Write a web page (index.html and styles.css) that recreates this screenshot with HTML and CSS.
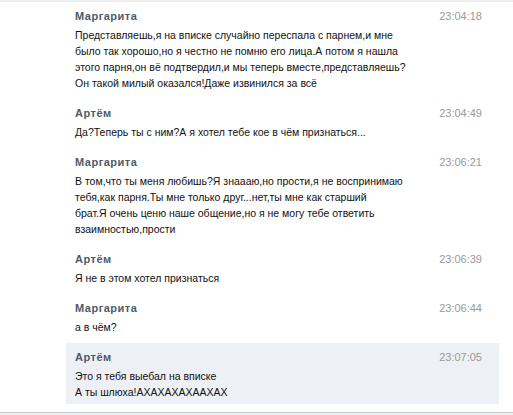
FILE: index.html
```html
<!DOCTYPE html>
<html lang="ru">
<head>
<meta charset="utf-8">
<link rel="stylesheet" href="styles.css">
</head>
<body>
<div class="log">
  <div class="msg">
    <div class="name">Маргарита</div>
    <div class="time">23:04:18</div>
    <div class="text">Представляешь,я на вписке случайно переспала с парнем,и мне<br>было так хорошо,но я честно не помню его лица.А потом я нашла<br>этого парня,он вё подтвердил,и мы теперь вместе,представляешь?<br>Он такой милый оказался!Даже извинился за всё</div>
  </div>
  <div class="msg">
    <div class="name">Артём</div>
    <div class="time">23:04:49</div>
    <div class="text">Да?Теперь ты с ним?А я хотел тебе кое в чём признаться...</div>
  </div>
  <div class="msg">
    <div class="name">Маргарита</div>
    <div class="time">23:06:21</div>
    <div class="text">В том,что ты меня любишь?Я знаааю,но прости,я не воспринимаю<br>тебя,как парня.Ты мне только друг...нет,ты мне как старший<br>брат.Я очень ценю наше общение,но я не могу тебе ответить<br>взаимностью,прости</div>
  </div>
  <div class="msg">
    <div class="name">Артём</div>
    <div class="time">23:06:39</div>
    <div class="text">Я не в этом хотел признаться</div>
  </div>
  <div class="msg">
    <div class="name">Маргарита</div>
    <div class="time">23:06:44</div>
    <div class="text">а в чём?</div>
  </div>
  <div class="msg msg-new">
    <div class="name">Артём</div>
    <div class="time">23:07:05</div>
    <div class="text">Это я тебя выебал на вписке<br>А ты шлюха!АХАХАХАХААХАХ</div>
  </div>
</div>
<div class="footer"></div>
</body>
</html>
```

FILE: styles.css
```css
html, body {
  margin: 0;
  padding: 0;
  background: #ffffff;
}
body {
  font-family: "Liberation Sans", Arial, sans-serif;
  font-size: 11px;
  color: #111;
  border-top: 2px solid #eeeeee;
}
.log {
  display: flex;
  flex-direction: column;
  gap: 4px;
  margin-left: 66px;
  width: 433px;
}
.msg {
  display: grid;
  grid-template-columns: 1fr auto;
  row-gap: 3px;
  padding: 6px 17px 4px 9px;
}
.msg-new {
  background: #edf0f5;
}
.name {
  font-weight: bold;
  color: #4d5a68;
  line-height: 16px;
  letter-spacing: 0.5px;
}
.time {
  color: #9a9a9a;
  line-height: 16px;
}
.text {
  grid-column: 1 / 3;
  font-size: 10.5px;
  line-height: 16px;
  white-space: nowrap;
}
.footer {
  margin-top: 8px;
  border-top: 1px solid #c9cacd;
  height: 4px;
  background: #f1f1f2;
}
```
